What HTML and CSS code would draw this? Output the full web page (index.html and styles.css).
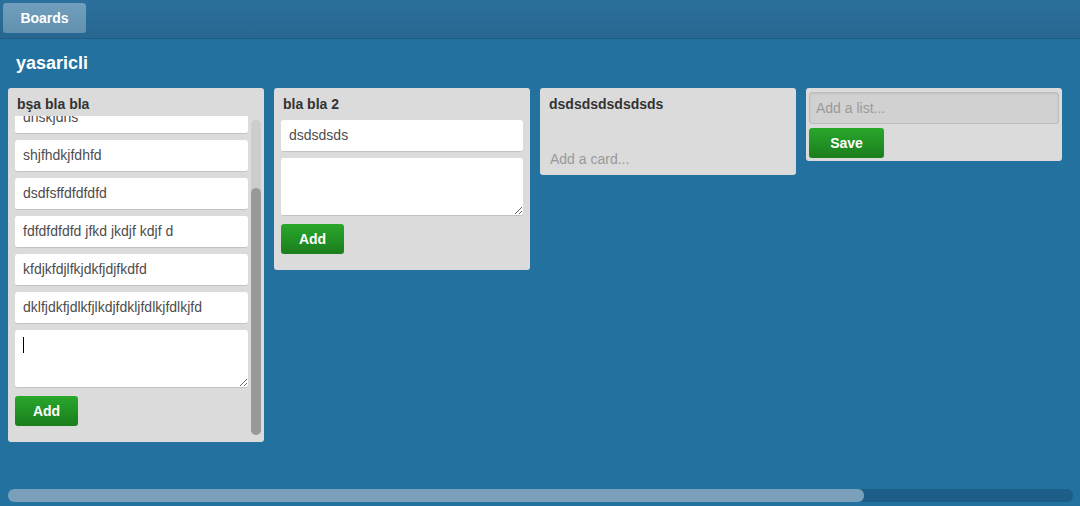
FILE: index.html
```html
<!DOCTYPE html>
<html lang="en">
<head>
<meta charset="utf-8">
<title>yasaricli</title>
<link rel="stylesheet" href="styles.css">
</head>
<body>
<header class="topbar">
  <a class="btn-boards">Boards</a>
</header>
<h1 class="board-title">yasaricli</h1>
<main class="board">
  <section class="list list-scroll">
    <h2 class="list-title">bşa bla bla</h2>
    <div class="list-body">
      <div class="viewport">
        <div class="card">dnskjdns</div>
        <div class="card">shjfhdkjfdhfd</div>
        <div class="card">dsdfsffdfdfdfd</div>
        <div class="card">fdfdfdfdfd jfkd jkdjf kdjf d</div>
        <div class="card">kfdjkfdjlfkjdkfjdjfkdfd</div>
        <div class="card">dklfjdkfjdlkfjlkdjfdkljfdlkjfdlkjfd</div>
        <div class="composer">
          <textarea class="composer-input"></textarea>
          <span class="caret"></span>
        </div>
        <button class="btn-green btn-add">Add</button>
      </div>
      <div class="vscroll"><div class="vscroll-thumb"></div></div>
    </div>
  </section>
  <section class="list">
    <h2 class="list-title">bla bla 2</h2>
    <div class="list-cards">
      <div class="card">dsdsdsds</div>
      <div class="composer">
        <textarea class="composer-input"></textarea>
      </div>
      <button class="btn-green btn-add">Add</button>
    </div>
  </section>
  <section class="list">
    <h2 class="list-title">dsdsdsdsdsdsds</h2>
    <a class="add-card">Add a card...</a>
  </section>
  <section class="list list-new">
    <input class="list-input" type="text" placeholder="Add a list...">
    <button class="btn-green btn-save">Save</button>
  </section>
</main>
<div class="hscroll"><div class="hscroll-thumb"></div></div>
</body>
</html>
```
FILE: styles.css
```css
* { box-sizing: border-box; }

html, body {
  margin: 0;
  height: 100%;
}

body {
  background: #23719f;
  font-family: "Liberation Sans", Arial, sans-serif;
  font-size: 14px;
  color: #333;
  display: flex;
  flex-direction: column;
  overflow: hidden;
}

.topbar {
  height: 39px;
  flex: none;
  padding: 3px;
  background: linear-gradient(#2b709c, #276791);
  border-bottom: 1px solid #1f5b82;
}

.btn-boards {
  display: flex;
  align-items: center;
  justify-content: center;
  width: 83px;
  height: 30px;
  border-radius: 3px;
  background: linear-gradient(rgba(255,255,255,0.33), rgba(255,255,255,0.27));
  color: #fff;
  font-weight: bold;
  font-size: 14px;
}

.board-title {
  margin: 0;
  padding: 14px 16px 0;
  font-size: 18px;
  line-height: 21px;
  font-weight: bold;
  color: #fff;
}

.board {
  flex: 1;
  display: flex;
  align-items: flex-start;
  gap: 10px;
  margin-top: 14px;
  padding: 0 8px;
}

.list {
  flex: none;
  width: 256px;
  background: #dbdbdb;
  border-radius: 3px;
  padding: 6px 7px;
  display: flex;
  flex-direction: column;
}

.list-title {
  margin: 0;
  padding: 0 2px;
  font-size: 14px;
  line-height: 20px;
  font-weight: bold;
  color: #333;
}

.list-cards {
  padding: 6px 0 10px;
  display: flex;
  flex-direction: column;
}

.card {
  flex: none;
  background: #fff;
  border-radius: 3px;
  border-bottom: 1px solid #c2c2c2;
  padding: 6px 8px 7px;
  line-height: 18px;
  color: #4d4d4d;
  margin-bottom: 6px;
  white-space: nowrap;
}

.composer {
  position: relative;
  flex: none;
}

.composer-input {
  display: block;
  width: 100%;
  height: 58px;
  margin: 0 0 8px;
  border: none;
  border-bottom: 1px solid #c2c2c2;
  border-radius: 3px;
  background: #fff;
  font: 14px "Liberation Sans", Arial, sans-serif;
  padding: 6px 8px;
  outline: none;
}

.caret {
  position: absolute;
  left: 8px;
  top: 7px;
  width: 1px;
  height: 16px;
  background: #000;
}

.btn-green {
  flex: none;
  height: 30px;
  border: none;
  border-radius: 3px;
  background: linear-gradient(#2aa82b, #1b7d1d);
  color: #fff;
  font: bold 14px "Liberation Sans", Arial, sans-serif;
  padding: 0;
}

.btn-add { width: 63px; }
.btn-save { width: 75px; margin-top: 4px; }

/* list with inner scroll */
.list-scroll { padding-right: 3px; }

.list-body {
  display: flex;
  gap: 3px;
  height: 320px;
  margin-top: 2px;
}

.viewport {
  width: 233px;
  height: 100%;
  overflow: hidden;
  display: flex;
  flex-direction: column;
  justify-content: flex-end;
  padding-bottom: 10px;
}

.vscroll {
  width: 10px;
  margin: 4px 0 1px;
  border-radius: 5px;
  background: #cdcdcd;
  display: flex;
  flex-direction: column;
  justify-content: flex-end;
}

.vscroll-thumb {
  height: 247px;
  border-radius: 5px;
  background: #999;
}

.add-card {
  margin-top: 30px;
  padding: 6px 3px 1px;
  line-height: 18px;
  color: #999;
}

.list-new {
  padding: 4px 3px 3px;
  align-items: flex-start;
}

.list-input {
  width: 100%;
  height: 32px;
  border: 1px solid #bdbdbd;
  border-radius: 3px;
  background: #d1d1d1;
  box-shadow: inset 0 1px 2px rgba(0,0,0,0.08);
  padding: 0 6px;
  font: 14px "Liberation Sans", Arial, sans-serif;
  color: #333;
  outline: none;
}

.list-input::placeholder { color: #9a9a9a; }

.hscroll {
  flex: none;
  height: 13px;
  margin: 0 7px 4px 8px;
  border-radius: 6px;
  background: #1d5e89;
  display: flex;
}

.hscroll-thumb {
  width: 856px;
  border-radius: 6px;
  background: #7a9fba;
}
```
